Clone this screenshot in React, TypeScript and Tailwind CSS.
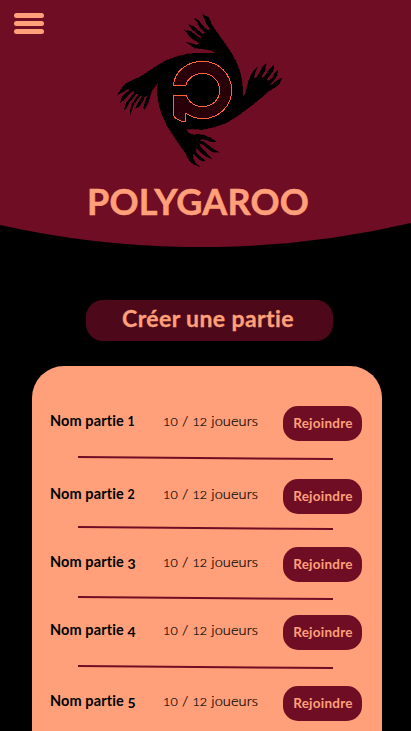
type Game = {
  id: number;
  digit: string;
  row: string;
  gap: string;
};

// x-height figures sit on the baseline, the others hang below it.
const SHORT = "text-[12.5px] tracking-[0.4px]";
const HANGING = "relative top-[2px] text-[14px]";

const GAMES: Game[] = [
  { id: 1, digit: SHORT, row: "mt-0", gap: "mt-[15px]" },
  { id: 2, digit: SHORT, row: "mt-[19px]", gap: "mt-[12px]" },
  { id: 3, digit: HANGING, row: "mt-[17px]", gap: "mt-[14px]" },
  { id: 4, digit: HANGING, row: "mt-[15px]", gap: "mt-[15px]" },
  { id: 5, digit: HANGING, row: "mt-[17px]", gap: "mt-[15px]" },
];

function Logo() {
  return (
    <svg viewBox="0 0 528 492" className="ml-[112px] block h-[164px] w-[176px]" shapeRendering="crispEdges">
      <path
        fill="#000"
        stroke="#000"
        strokeWidth="1"
        d="M271 18L278 22L289 27L294 37L299 48L304 57L311 67L325 87L341 109L357 133L371 158L382 185L389 211L392 238L393 267
        L400 256L405 236L411 215L420 196L427 185L436 178L431 191L426 207L429 213L438 202L447 187L451 176L463 166L460 179L459 189L449 204L451 211L463 199L470 187L478 178L486 172L484 187L476 200L463 216L470 218L482 209L487 197L498 185L495 203L486 216L474 228L477 232L488 223L497 216L509 211L502 229L489 239L472 248L447 270L417 294L383 320L345 344L308 357L272 365L221 363
        L230 375L244 380L260 379L278 382L296 390L313 401L296 401L283 396L268 393L264 397L279 404L292 414L306 424L321 433L303 433L289 423L273 410L262 406L266 417L278 428L287 439L300 452L286 448L269 436L256 424L250 421L253 434L265 446L279 457L273 460L261 454L248 440L244 437L244 451L250 465L264 476L246 470L234 460L226 448L220 434L202 410L184 383L166 355L151 323L141 291L136 260L135 239L140 224
        L131 233L120 248L114 266L109 285L98 305L94 300L99 282L106 264L99 264L91 283L80 297L70 301L78 286L91 263L85 263L75 276L64 291L61 303L54 320L55 303L60 289L69 273L80 258L73 257L63 270L51 285L44 300L36 305L43 284L58 265L69 251L62 249L49 261L38 274L25 284L29 268L44 253L54 246L48 243L31 253L15 262L28 243L40 227L58 218L83 207L105 193L132 175L163 157L195 145L231 137L267 135L309 136
        L307 132L292 126L268 122L249 121L235 112L222 102L241 107L256 111L263 106L246 96L233 86L226 76L217 67L236 70L249 79L264 91L269 88L254 76L240 64L230 49L244 55L256 65L273 79L278 74L264 60L257 44L246 31L260 37L270 50L280 62L291 67L294 61L283 48L278 34Z"
      />
      <path
        fill="#290008"
        stroke="#ff6338"
        strokeWidth="3"
        d="M184 232C188 190 225 160 272 160C320 160 359 199 359 247C359 294 320 332 272 332C253 332 235 325 220 315V341C207 341 184 333 184 315V262H223C229 281 248 296 272 296C301 296 323 275 323 247C323 219 300 196 272 196C249 196 226 211 222 232Z"
      />
    </svg>
  );
}

function GameRow({ game, last }: { game: Game; last: boolean }) {
  return (
    <li>
      <div className={`flex h-[35px] items-start pl-[18px] ${game.row}`}>
        <span className="w-[113px] pt-[5px] text-[14.5px] leading-5 font-bold tracking-[0.1px] whitespace-nowrap text-black">
          Nom partie <span className={game.digit}>{game.id}</span>
        </span>
        <span className="w-[120px] pt-[5px] text-[14.5px] leading-5 font-light tracking-[0.1px] whitespace-nowrap text-black [-webkit-text-stroke:0.2px_#000]">
          <span className="text-[12.5px] tracking-[0.2px]">10</span> / <span className="text-[12.5px] tracking-[0.2px]">12</span> joueurs
        </span>
        <button className="h-[35px] w-[79px] rounded-[15px] bg-[#6f0d25] pl-[1px] text-[13.5px] font-bold tracking-[0.25px] text-[#ffa07a]">
          Rejoindre
        </button>
      </div>
      {!last && (
        <svg viewBox="0 0 255 4" className={`ml-[46px] block h-1 w-[255px] ${game.gap}`}>
          <path d="M0 1L255 3" stroke="#6f0d25" strokeWidth="2" />
        </svg>
      )}
    </li>
  );
}

export default function App() {
  return (
    <main className="h-[731px] w-[411px] overflow-hidden bg-black font-['Lato',sans-serif]">
      <header className="relative isolate h-[247px] pt-2">
        <svg viewBox="0 0 411 247" className="absolute inset-0 -z-10 h-[247px] w-[411px]">
          <path d="M0 0H411V223A925 925 0 0 1 0 225Z" fill="#6f0d25" />
        </svg>
        <button aria-label="Menu" className="absolute top-[13px] left-[14px] flex flex-col gap-[3px]">
          <span className="h-[5px] w-[30px] rounded-full bg-[#ffa07a]" />
          <span className="h-[5px] w-[30px] rounded-full bg-[#ffa07a]" />
          <span className="h-[5px] w-[30px] rounded-full bg-[#ffa07a]" />
        </button>
        <Logo />
        <h1 className="mt-[9px] ml-[87px] text-[36px] leading-10 font-bold tracking-[0.2px] whitespace-nowrap text-[#ffa07a] [-webkit-text-stroke:0.5px_#ffa07a]">
          POLYGAROO
        </h1>
      </header>
      <button className="mt-[53px] ml-[86px] block h-[41px] w-[247px] rounded-[17px] bg-[#4d0919] pr-[3px] pb-1 text-[23px] leading-none font-bold tracking-[0.4px] text-[#ffa07a] [-webkit-text-stroke:0.3px_#ffa07a]">
        Créer une partie
      </button>
      <ul className="mt-[25px] ml-8 h-[400px] w-[350px] rounded-t-[32px] bg-[#ffa07a] pt-10">
        {GAMES.map((game, i) => (
          <GameRow key={game.id} game={game} last={i === GAMES.length - 1} />
        ))}
      </ul>
    </main>
  );
}
